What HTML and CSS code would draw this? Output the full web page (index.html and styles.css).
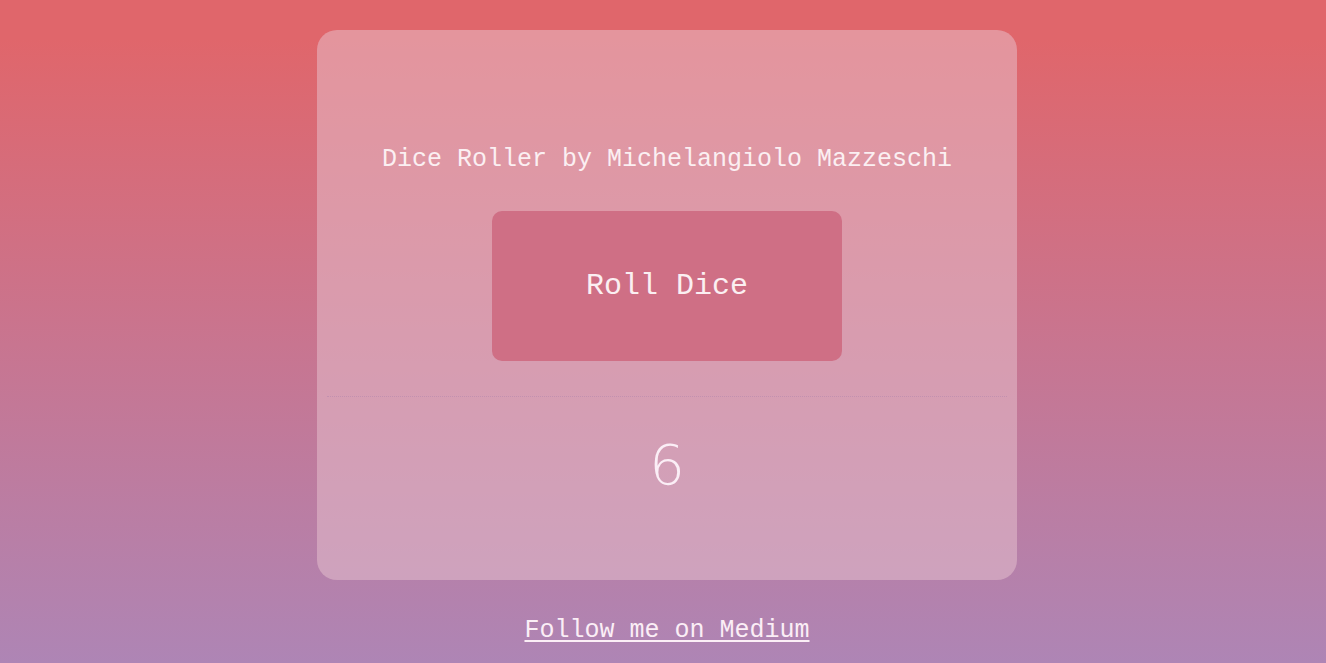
FILE: index.html
```html
<!DOCTYPE html>
<html>
<head>
<meta charset="utf-8">
<link rel="stylesheet" href="styles.css">
</head>
<body>
<main class="page">
  <section class="card">
    <h1 class="title">Dice Roller by Michelangiolo Mazzeschi</h1>
    <button class="roll">Roll Dice</button>
    <hr class="divider">
    <div class="result">6</div>
  </section>
  <a class="follow" href="#">Follow me on Medium</a>
</main>
</body>
</html>
```
FILE: styles.css
```css
html, body {
  margin: 0;
  padding: 0;
  height: 100%;
}
body {
  background: linear-gradient(180deg, #e0666b 0%, #e0666b 6%, #c87590 52%, #ae85b5 100%);
  font-family: "Liberation Mono", "Courier New", monospace;
  color: #fff;
  overflow: hidden;
}
.page {
  display: flex;
  flex-direction: column;
  align-items: center;
  padding-top: 30px;
  padding-left: 8px;
}
.card {
  width: 700px;
  height: 550px;
  box-sizing: border-box;
  border-radius: 20px;
  background: rgba(232, 196, 207, 0.5);
  display: flex;
  flex-direction: column;
  align-items: center;
  padding-top: 115px;
}
.title {
  margin: 0;
  font-weight: normal;
  font-size: 25px;
  line-height: 30px;
  color: #fbeff2;
}
.roll {
  margin-top: 36px;
  width: 350px;
  height: 150px;
  border: none;
  border-radius: 10px;
  background: #cf6f85;
  color: #fbeff2;
  font-family: "Liberation Mono", "Courier New", monospace;
  font-size: 30px;
  padding: 0;
}
.divider {
  margin: 35px 0 0 0;
  width: 680px;
  border: none;
  border-top: 1px dotted rgba(160, 120, 170, 0.35);
  height: 0;
}
.result {
  margin-top: 36px;
  font-family: "DejaVu Sans", sans-serif;
  font-weight: 200;
  font-size: 56px;
  line-height: 64px;
  color: #fbeef6;
}
.follow {
  margin-top: 36px;
  font-size: 25px;
  line-height: 30px;
  color: #fbeef6;
  text-decoration: underline;
  text-underline-offset: 3px;
}
```
